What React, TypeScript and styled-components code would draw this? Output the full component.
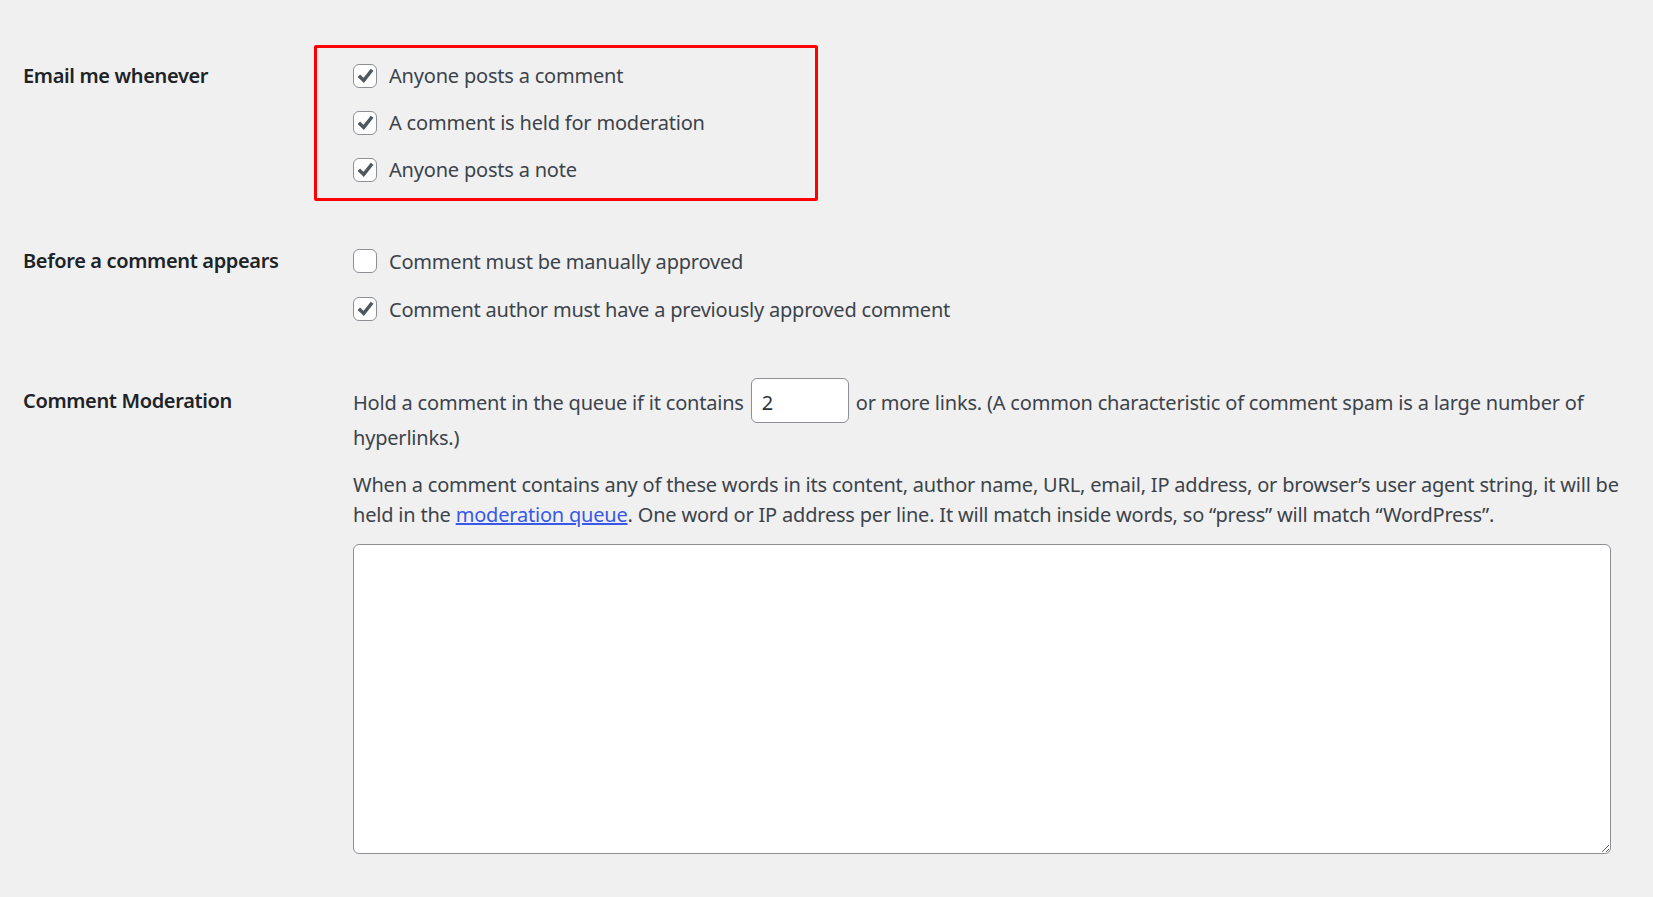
import React from "react";
import styled, { createGlobalStyle } from "styled-components";

const GlobalStyle = createGlobalStyle`
	html, body {
		margin: 0;
		padding: 0;
		background: #f0f0f1;
	}
	body {
		font-family: "Noto Sans", "Open Sans", sans-serif;
		font-size: 20px;
		letter-spacing: -0.2px;
		color: #3c434a;
	}
`;

const EMAIL_OPTIONS = [
	{ label: "Anyone posts a comment", checked: true },
	{ label: "A comment is held for moderation", checked: true },
	{ label: "Anyone posts a note", checked: true },
];

const APPEAR_OPTIONS = [
	{ label: "Comment must be manually approved", checked: false },
	{ label: "Comment author must have a previously approved comment", checked: true },
];

const CheckOption = ({ label, checked, tall }: { label: string; checked: boolean; tall?: boolean }) => (
	<Option $tall={tall}>
		<Box>
			{checked && (
				<svg width="24" height="24" viewBox="0 0 24 24">
					<polyline
						points="5.3,11.6 10.6,16.8 19.8,5.2"
						fill="none"
						stroke="#50575e"
						strokeWidth="3.8"
					/>
				</svg>
			)}
		</Box>
		<span>{label}</span>
	</Option>
);

export default function App() {
	return (
		<>
			<GlobalStyle />
			<Page>
				<Row>
					<Label $h={47}>Email me whenever</Label>
					<Field>
						<Highlight>
							{EMAIL_OPTIONS.map((o) => (
								<CheckOption key={o.label} {...o} />
							))}
						</Highlight>
					</Field>
				</Row>
				<Row>
					<Label $h={48}>Before a comment appears</Label>
					<Field>
						{APPEAR_OPTIONS.map((o) => (
							<CheckOption key={o.label} {...o} tall />
						))}
					</Field>
				</Row>
				<Row>
					<Label $h={47}>Comment Moderation</Label>
					<Field>
						<LinksText>
							Hold a comment in the queue if it contains{" "}
							<NumberInput type="number" defaultValue={2} /> or more links. (A common
							characteristic of comment spam is a large number of hyperlinks.)
						</LinksText>
						<Description>
							When a comment contains any of these words in its content, author name, URL,
							email, IP address, or browser’s user agent string, it will be held in the{" "}
							<Link href="#">moderation queue</Link>. One word or IP address per line. It
							will match inside words, so “press” will match “WordPress”.
						</Description>
						<KeysArea />
					</Field>
				</Row>
			</Page>
		</>
	);
}

const Page = styled.div`
	padding: 52px 12px 40px 23px;
	display: flex;
	flex-direction: column;
	gap: 44px;
`;

const Row = styled.div`
	display: grid;
	grid-template-columns: 330px 1fr;
	align-items: start;
`;

const Label = styled.div<{ $h: number }>`
	font-weight: 600;
	color: #1d2327;
	letter-spacing: -0.35px;
	line-height: ${(p) => p.$h}px;
`;

const Field = styled.div`
	display: flex;
	flex-direction: column;
	align-items: flex-start;
`;

const Highlight = styled.div`
	position: relative;

	&::before {
		content: "";
		position: absolute;
		top: -7px;
		left: -39px;
		width: 504px;
		height: 156px;
		box-sizing: border-box;
		border: 3px solid #ff0000;
		border-radius: 2px;
		pointer-events: none;
	}
`;

const Option = styled.label<{ $tall?: boolean }>`
	display: flex;
	align-items: center;
	gap: 12px;
	height: ${(p) => (p.$tall ? 48 : 47)}px;
	white-space: nowrap;
`;

const Box = styled.span`
	width: 24px;
	height: 24px;
	box-sizing: border-box;
	border: 1.5px solid #8c8f94;
	border-radius: 6px;
	background: #fff;
	display: flex;
	align-items: center;
	justify-content: center;
	flex-shrink: 0;

	svg {
		display: block;
	}
`;

const LinksText = styled.p`
	margin: 1px 0 0;
	line-height: 30px;
`;

const NumberInput = styled.input`
	width: 98px;
	height: 45px;
	box-sizing: border-box;
	padding: 4px 10px 0;
	margin: 0 2px;
	border: 1.5px solid #8c8f94;
	border-radius: 6px;
	background: #fff;
	font: inherit;
	color: #2c3338;
	vertical-align: baseline;
	-moz-appearance: textfield;

	&::-webkit-inner-spin-button,
	&::-webkit-outer-spin-button {
		-webkit-appearance: none;
		margin: 0;
	}
`;

const Description = styled.p`
	margin: 17px 0 0;
	line-height: 29.5px;
`;

const Link = styled.a`
	color: #3858e9;
	text-decoration: underline;
`;

const KeysArea = styled.textarea`
	margin-top: 15px;
	width: 1258px;
	height: 310px;
	box-sizing: border-box;
	border: 1.5px solid #8c8f94;
	border-radius: 6px;
	background: #fff;
	font: inherit;
`;
